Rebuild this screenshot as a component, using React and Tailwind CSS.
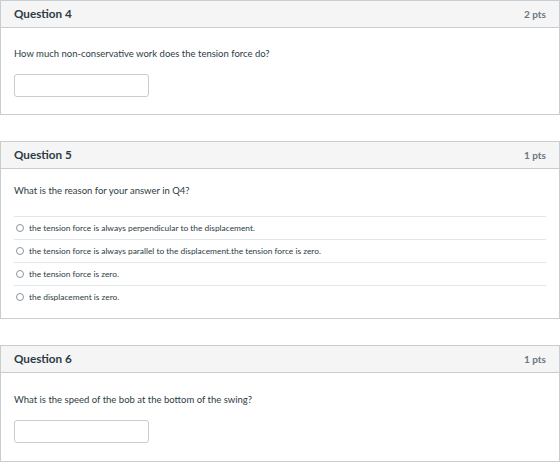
import React from 'react';

const font = { fontFamily: 'Lato, "Open Sans", sans-serif' };

const QuestionHeader = ({ title, points }) => (
    <div className="h-[27px] flex items-center justify-between px-[13px] bg-[#f5f5f5] border-b border-[#c7cdd1]">
        <span className="text-[11.7px] font-bold text-[#2d3b45]">{title}</span>
        <span className="text-[10px] font-bold text-[#6b7780]">{points}</span>
    </div>
);

const AnswerBox = () => (
    <input
        type="text"
        className="block w-[135px] h-[23px] border border-[#c7cdd1] rounded-[3px] bg-white outline-none"
    />
);

const options = [
    'the tension force is always perpendicular to the displacement.',
    'the tension force is always parallel to the displacement.the tension force is zero.',
    'the tension force is zero.',
    'the displacement is zero.',
];

export default function App() {
    return (
        <div className="w-[560px] h-[463px] bg-white flex flex-col gap-[26px] overflow-hidden" style={font}>
            {/* Question 4 */}
            <div className="border border-[#c7cdd1] bg-white">
                <QuestionHeader title="Question 4" points="2 pts" />
                <div className="px-[13px] pt-[19px] pb-[17px]">
                    <p className="text-[9.5px] leading-[14px] text-[#2d3b45]">How much non-conservative work does the tension force do?</p>
                    <div className="mt-[13px]"><AnswerBox /></div>
                </div>
            </div>

            {/* Question 5 */}
            <div className="border border-[#c7cdd1] bg-white">
                <QuestionHeader title="Question 5" points="1 pts" />
                <div className="px-[13px] pt-[15px] pb-[10px]">
                    <p className="text-[9.5px] leading-[14px] text-[#2d3b45] mb-[18px]">What is the reason for your answer in Q4?</p>
                    <div className="flex flex-col">
                        {options.map((opt) => (
                            <label key={opt} className="h-[23px] flex items-center gap-[5px] pl-[2px] border-t border-[#e3e6e8] text-[8.4px] text-[#2d3b45]">
                                <span className="w-[8px] h-[8px] rounded-full border border-[#8a959c] bg-white shrink-0"></span>
                                {opt}
                            </label>
                        ))}
                    </div>
                </div>
            </div>

            {/* Question 6 */}
            <div className="border border-[#c7cdd1] bg-white">
                <QuestionHeader title="Question 6" points="1 pts" />
                <div className="px-[13px] pt-[20px] pb-[18px]">
                    <p className="text-[9.5px] leading-[14px] text-[#2d3b45]">What is the speed of the bob at the bottom of the swing?</p>
                    <div className="mt-[13px]"><AnswerBox /></div>
                </div>
            </div>
        </div>
    );
}
